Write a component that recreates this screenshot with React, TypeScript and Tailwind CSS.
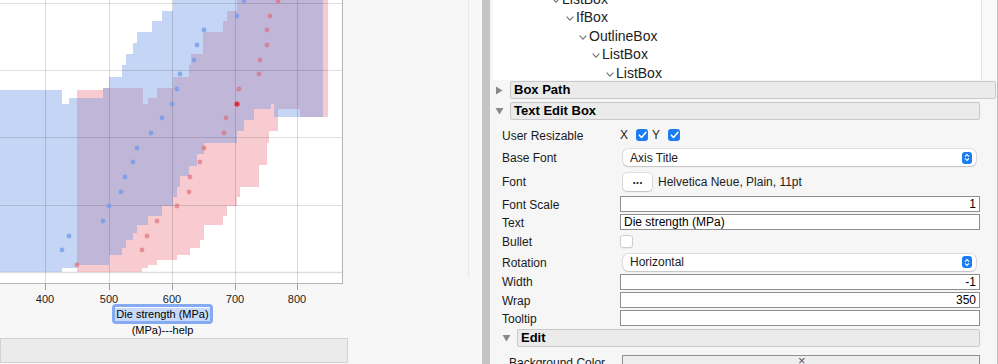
import React from "react";

const redBand: [number, number][] = [
  [77, 90], [103, 90], [103, 88], [143, 88], [143, 104], [148, 104], [148, 98], [157, 98], [157, 88],
  [173, 88], [173, 77], [189, 77], [189, 65], [191, 65], [191, 54], [203, 54], [203, 32], [223, 32],
  [223, 21], [227, 21], [227, 11], [237, 11], [237, -5], [328, -5], [328, 117], [300, 117], [300, 109],
  [278, 109], [278, 131], [269, 131], [269, 143], [267, 143], [267, 165], [259, 165], [259, 187],
  [240, 187], [240, 197], [237, 197], [237, 206], [227, 206], [227, 216], [223, 216], [223, 225],
  [204, 225], [204, 240], [200, 240], [200, 248], [190, 248], [190, 255], [177, 255], [177, 260],
  [157, 260], [157, 265], [148, 265], [148, 268], [142, 268], [142, 272], [77, 272],
];

const blueBand: [number, number][] = [
  [0, 90], [62, 90], [62, 104], [69, 104], [69, 98], [103, 98], [103, 88], [109, 88], [109, 77],
  [122, 77], [122, 65], [126, 65], [126, 54], [133, 54], [133, 43], [137, 43], [137, 32], [152, 32],
  [152, 21], [162, 21], [162, 11], [173, 11], [173, -5], [323, -5], [323, 117], [274, 117], [274, 104],
  [271, 104], [271, 109], [254, 109], [254, 120], [244, 120], [244, 131], [237, 131], [237, 143],
  [204, 143], [204, 154], [197, 154], [197, 166], [189, 166], [189, 176], [180, 176], [180, 187],
  [177, 187], [177, 197], [173, 197], [173, 206], [162, 206], [162, 216], [148, 216], [148, 225],
  [137, 225], [137, 233], [133, 233], [133, 240], [126, 240], [126, 248], [122, 248], [122, 255],
  [109, 255], [109, 265], [77, 265], [77, 268], [62, 268], [62, 272], [0, 272],
];

const blueDots: [number, number][] = [
  [69, 236], [62, 250], [103, 221], [109, 206], [121, 192], [125, 177], [133, 162], [137, 148],
  [151, 133], [162, 118], [172, 104], [177, 89], [180, 74], [194, 60], [197, 45], [204, 30],
  [237, 16], [244, 1],
];

const redDots: [number, number][] = [
  [77, 265], [142, 250], [147, 236], [157, 221], [177, 206], [189, 192], [190, 177], [200, 162],
  [204, 148], [224, 133], [226, 118], [239, 89], [259, 74], [260, 60], [267, 45], [267, 30],
  [270, 16], [278, 1],
];

const gridX = [45.5, 109.5, 172.5, 235.5, 297.5];
const gridY = [3.5, 70.5, 137.5, 205.5, 272.5];
const ticks = ["400", "500", "600", "700", "800"];

const pts = (p: [number, number][]) => p.map(([x, y]) => `${x},${y}`).join(" ");

function Chart() {
  return (
    <svg width="343" height="304" className="block shrink-0">
      <rect x="0" y="0" width="342" height="283" fill="#ffffff" />
      <polygon points={pts(redBand)} fill="rgb(234,112,122)" fillOpacity="0.36" />
      <polygon points={pts(blueBand)} fill="rgb(110,150,230)" fillOpacity="0.4" />
      {gridX.map((x) => (
        <line key={x} x1={x} y1="0" x2={x} y2="283" stroke="rgba(0,0,0,0.14)" />
      ))}
      {gridY.map((y) => (
        <line key={y} x1="0" y1={y} x2="342" y2={y} stroke="rgba(0,0,0,0.13)" strokeWidth={y > 270 ? 1.5 : 1} />
      ))}
      {blueDots.map(([x, y], i) => (
        <circle key={"b" + i} cx={x} cy={y} r="2.4" fill="rgb(112,152,236)" fillOpacity="0.75" />
      ))}
      {redDots.map(([x, y], i) => (
        <circle key={"r" + i} cx={x} cy={y} r="2.4" fill="rgb(222,98,110)" fillOpacity="0.6" />
      ))}
      <circle cx="237" cy="104" r="2.6" fill="#d7323b" />
      <line x1="342.5" y1="0" x2="342.5" y2="284" stroke="#b4b4b4" />
      <line x1="0" y1="283.5" x2="343" y2="283.5" stroke="#b4b4b4" />
      {gridX.map((x) => (
        <line key={"t" + x} x1={x} y1="284" x2={x} y2="290" stroke="#a0a0a0" />
      ))}
      {gridX.map((x, i) => (
        <text
          key={"l" + x}
          x={x - 0.5}
          y="302.5"
          textAnchor="middle"
          fontSize="11"
          fill="#222"
          fontFamily="'Liberation Sans', Arial, sans-serif"
        >
          {ticks[i]}
        </text>
      ))}
    </svg>
  );
}

function Chevron() {
  return (
    <svg width="8" height="5" viewBox="0 0 8 5" className="mt-[2px] shrink-0">
      <polyline points="0.6,0.6 4,4.2 7.4,0.6" fill="none" stroke="#707070" strokeWidth="1.1" />
    </svg>
  );
}

function TreeRow({ indent, label }: { indent: string; label: string }) {
  return (
    <div className={`flex h-[18.5px] items-center gap-[2px] ${indent}`}>
      <Chevron />
      <span>{label}</span>
    </div>
  );
}

function Triangle({ open }: { open: boolean }) {
  return open ? (
    <svg width="9" height="8" viewBox="0 0 9 8" className="shrink-0">
      <polygon points="0.5,1 8.5,1 4.5,7.5" fill="#8a8a8a" />
    </svg>
  ) : (
    <svg width="8" height="9" viewBox="0 0 8 9" className="shrink-0">
      <polygon points="1,0.5 7.5,4.5 1,8.5" fill="#8a8a8a" />
    </svg>
  );
}

function SectionHeader({ label, open, width }: { label: string; open: boolean; width: string }) {
  return (
    <div className="flex items-center">
      <div className="flex w-[20px] justify-center pr-[2px]">
        <Triangle open={open} />
      </div>
      <div
        className={`flex h-[18px] items-center rounded-[2px] border border-[#c9c9c9] bg-[#ebebeb] pl-[3px] text-[13px] font-bold text-black ${width}`}
      >
        {label}
      </div>
    </div>
  );
}

function Stepper() {
  return (
    <span className="flex h-[12px] w-[10px] items-center justify-center rounded-[3px] bg-[#1b7cf4]">
      <svg width="6" height="9" viewBox="0 0 6 9">
        <path d="M1 3.6 3 1.6 5 3.6M1 5.4 3 7.4 5 5.4" stroke="#ffffff" strokeWidth="1.1" fill="none" />
      </svg>
    </span>
  );
}

function Select({ value }: { value: string }) {
  return (
    <div className="ml-[3px] flex h-[17px] w-[353px] items-center justify-between rounded-[5px] bg-white pl-[7px] pr-[4px] text-[12px] text-[#222] shadow-[0_0_0_0.5px_rgba(0,0,0,0.2),0_1px_1.5px_rgba(0,0,0,0.12)]">
      <span>{value}</span>
      <Stepper />
    </div>
  );
}

function Input({ value, right }: { value?: string; right?: boolean }) {
  return (
    <div
      className={`flex h-[16px] w-[360px] items-center border border-[#8e8e8e] bg-white px-[3px] text-[12px] text-black ${
        right ? "justify-end" : "justify-start"
      }`}
    >
      {value}
    </div>
  );
}

function Checked() {
  return (
    <span className="flex h-[12px] w-[12px] items-center justify-center rounded-[3px] bg-[#1b7cf4]">
      <svg width="9" height="8" viewBox="0 0 9 8">
        <path d="M1.3 4.2 3.5 6.4 7.8 1.4" stroke="#ffffff" strokeWidth="1.6" fill="none" strokeLinecap="round" strokeLinejoin="round" />
      </svg>
    </span>
  );
}

function Row({ label, h, children }: { label: string; h: string; children?: React.ReactNode }) {
  return (
    <div className={`flex items-center pl-[12px] ${h}`}>
      <div className="w-[118px] shrink-0 pt-[1px] text-[12px] text-[#1a1a1a]">{label}</div>
      {children}
    </div>
  );
}

export default function App() {
  return (
    <div className="flex h-[364px] w-[998px] overflow-hidden bg-[#f7f7f7] font-['Liberation_Sans',Arial,sans-serif] text-[#1a1a1a]">
      {/* graph side */}
      <div className="flex w-[468px] shrink-0 flex-col">
        <Chart />
        <div className="ml-[112px] flex h-[20px] w-[101px] shrink-0 items-center justify-center rounded-[4px] border-[3px] border-[#84abf2] bg-white">
          <span className="bg-[#c8dafa] px-[1px] text-[11px] leading-[13px] text-black">Die strength (MPa)</span>
        </div>
        <div className="ml-[112px] w-[101px] shrink-0 text-center text-[11px] leading-[12px] text-black">(MPa)---help</div>
        <div className="mt-[2px] h-[25px] w-[348px] shrink-0 border border-[#d2d2d2] bg-[#ebebeb]" />
      </div>
      <div className="w-[14px] shrink-0">
        <div className="h-[277px] border-l border-[#e8e8e8]" />
      </div>
      <div className="w-[8px] shrink-0 bg-[#c4c4c4]" />

      {/* properties side */}
      <div className="w-[507px] shrink-0 overflow-hidden bg-[#f6f6f6]">
        <div className="flex h-[80px]">
          <div className="ml-[3px] h-[80px] w-[489px] overflow-hidden border-r border-[#e4e4e4] bg-white text-[14px] text-[#222]">
            <div className="-mt-[10px]">
              <TreeRow indent="pl-[59px]" label="ListBox" />
              <TreeRow indent="pl-[73px]" label="IfBox" />
              <TreeRow indent="pl-[86px]" label="OutlineBox" />
              <TreeRow indent="pl-[99px]" label="ListBox" />
              <TreeRow indent="pl-[113px]" label="ListBox" />
            </div>
          </div>
          <div className="flex-1 bg-[#f9f9f9]" />
        </div>

        <div className="mt-[1px]">
          <SectionHeader label="Box Path" open={false} width="w-[486px]" />
        </div>
        <div className="mt-[3px]">
          <SectionHeader label="Text Edit Box" open={true} width="w-[470px]" />
        </div>

        <Row label="User Resizable" h="h-[24px] mt-[3px]">
          <span className="text-[12px]">X</span>
          <span className="ml-[8px]"><Checked /></span>
          <span className="ml-[4px] text-[12px]">Y</span>
          <span className="ml-[8px]"><Checked /></span>
        </Row>
        <Row label="Base Font" h="h-[21px]">
          <Select value="Axis Title" />
        </Row>
        <Row label="Font" h="h-[27px]">
          <div className="ml-[3px] flex h-[18px] w-[29px] items-center justify-center rounded-[4px] bg-white pb-[4px] text-[12px] font-bold text-[#222] shadow-[0_0_0_0.5px_rgba(0,0,0,0.2),0_1px_1.5px_rgba(0,0,0,0.12)]">
            ...
          </div>
          <span className="ml-[6px] text-[12px] text-[#222]">Helvetica Neue, Plain, 11pt</span>
        </Row>
        <Row label="Font Scale" h="h-[18px]">
          <Input value="1" right />
        </Row>
        <Row label="Text" h="h-[18px]">
          <Input value="Die strength (MPa)" />
        </Row>
        <Row label="Bullet" h="h-[21px]">
          <span className="h-[13px] w-[13px] rounded-[3px] border border-[#cdcdcd] bg-white shadow-[0_1px_1px_rgba(0,0,0,0.06)]" />
        </Row>
        <Row label="Rotation" h="h-[20px]">
          <Select value="Horizontal" />
        </Row>
        <Row label="Width" h="h-[19px]">
          <Input value="-1" right />
        </Row>
        <Row label="Wrap" h="h-[18px]">
          <Input value="350" right />
        </Row>
        <Row label="Tooltip" h="h-[18px]">
          <Input />
        </Row>

        <div className="ml-[7px] mt-[2px]">
          <SectionHeader label="Edit" open={true} width="w-[463px]" />
        </div>
        <div className="mt-[8px] flex items-start pl-[19px]">
          <div className="w-[113px] shrink-0 pt-[1px] text-[12px] leading-[14px] text-[#1a1a1a]">Background Color</div>
          <div className="relative h-[20px] w-[358px] border border-[#8e8e8e] bg-[#eeeeee]">
            <span className="absolute left-[175px] top-[-2px] text-[13px] leading-[14px] text-[#555]">×</span>
          </div>
        </div>
      </div>
      <div className="w-[1px] shrink-0 bg-[#bdbdbd]" />
    </div>
  );
}
